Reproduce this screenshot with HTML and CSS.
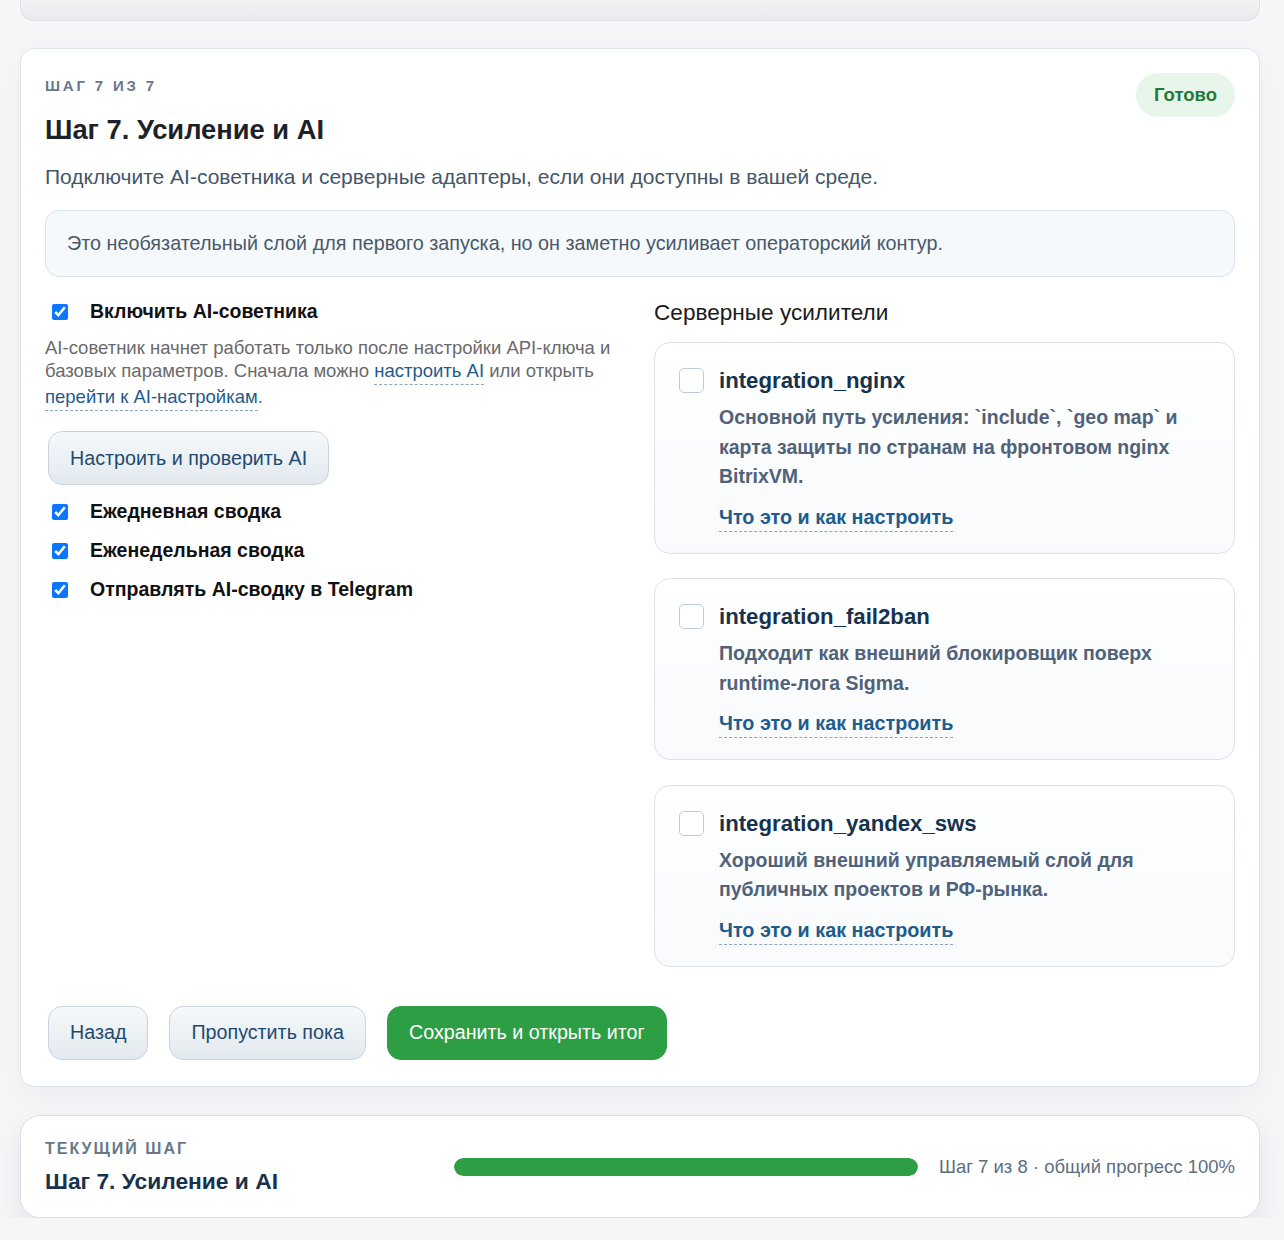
FILE: index.html
```html
<!DOCTYPE html>
<html lang="ru">

<head>
  <meta charset="UTF-8">
  <meta name="viewport" content="width=device-width, initial-scale=1.0">
  <title>Мастер настройки</title>

  <link rel="stylesheet" href="styles.css">

</head>

<body>

  <div class="wrap">

    <div class="stubCard"></div>

    <!-- step 7 -->
    <section class="stepCard">
      <div class="stepHead">
        <div>
          <div class="eyebrow">Шаг 7 из 7</div>
          <h2 class="stepTitle">Шаг 7. Усиление и AI</h2>
        </div>
        <span class="badge">Готово</span>
      </div>

      <p class="stepDesc">Подключите AI-советника и серверные адаптеры, если они доступны в вашей среде.</p>

      <div class="note">Это необязательный слой для первого запуска, но он заметно усиливает операторский контур.</div>

      <div class="cols">
        <div class="leftCol">
          <label class="checkRow">
            <input type="checkbox" checked>
            <span>Включить AI-советника</span>
          </label>
          <p class="hint">
            AI-советник начнет работать только после настройки API-ключа и базовых параметров.
            Сначала можно <a class="dashLink" href="#">настроить AI</a> или открыть
            <a class="dashLink" href="#">перейти к AI-настройкам</a>.
          </p>
          <button class="btn btnAi">Настроить и проверить AI</button>
          <div class="checkList">
            <label class="checkRow">
              <input type="checkbox" checked>
              <span>Ежедневная сводка</span>
            </label>
            <label class="checkRow">
              <input type="checkbox" checked>
              <span>Еженедельная сводка</span>
            </label>
            <label class="checkRow">
              <input type="checkbox" checked>
              <span>Отправлять AI-сводку в Telegram</span>
            </label>
          </div>
        </div>

        <div class="rightCol">
          <h3 class="colTitle">Серверные усилители</h3>

          <div class="intCard">
            <label class="intHead">
              <input type="checkbox" class="intBox">
              <span class="intName">integration_nginx</span>
            </label>
            <div class="intBody">
              <p class="intDesc">Основной путь усиления: `include`, `geo map` и карта защиты по странам на фронтовом nginx BitrixVM.</p>
              <a class="dashLink intLink" href="#">Что это и как настроить</a>
            </div>
          </div>

          <div class="intCard">
            <label class="intHead">
              <input type="checkbox" class="intBox">
              <span class="intName">integration_fail2ban</span>
            </label>
            <div class="intBody">
              <p class="intDesc">Подходит как внешний блокировщик поверх runtime-лога Sigma.</p>
              <a class="dashLink intLink" href="#">Что это и как настроить</a>
            </div>
          </div>

          <div class="intCard">
            <label class="intHead">
              <input type="checkbox" class="intBox">
              <span class="intName">integration_yandex_sws</span>
            </label>
            <div class="intBody">
              <p class="intDesc">Хороший внешний управляемый слой для публичных проектов и РФ-рынка.</p>
              <a class="dashLink intLink" href="#">Что это и как настроить</a>
            </div>
          </div>
        </div>
      </div>

      <div class="actions">
        <button class="btn">Назад</button>
        <button class="btn">Пропустить пока</button>
        <button class="btn btnGreen">Сохранить и открыть итог</button>
      </div>
    </section>

    <!-- progress -->
    <section class="progressCard">
      <div>
        <div class="eyebrow eyebrowSmall">Текущий шаг</div>
        <div class="progressTitle">Шаг 7. Усиление и AI</div>
      </div>
      <div class="bar"><div class="barFill" style="width: 100%"></div></div>
      <div class="progressText">Шаг 7 из 8 · общий прогресс 100%</div>
    </section>

  </div>

</body>

</html>
```

FILE: styles.css
```css
body {
  margin: 0;
  background: #f5f6f8;
  font-family: "Liberation Sans", Arial, sans-serif;
  color: #1d2228;
}

.wrap {
  width: 1240px;
  margin-left: 20px;
}

/* previous step, cut off */
.stubCard {
  height: 20px;
  background: linear-gradient(#f1f2f4, #e8eaed);
  border: 1px solid #d9dfe6;
  border-top: none;
  border-radius: 0 0 14px 14px;
}

/* step card */
.stepCard {
  margin-top: 27px;
  padding: 24px 24px 26px;
  background: #fff;
  border: 1px solid #dce3ea;
  border-radius: 14px;
  box-shadow: 0 10px 30px rgba(20, 30, 50, 0.04);
}

.stepHead {
  display: flex;
  justify-content: space-between;
  align-items: flex-start;
}

.eyebrow {
  margin-top: 4px;
  font-size: 15px;
  line-height: 17px;
  font-weight: bold;
  letter-spacing: 2.8px;
  text-transform: uppercase;
  color: #677889;
}

.stepTitle {
  margin: 20px 0 0;
  font-size: 27.3px;
  line-height: 32px;
  font-weight: bold;
  color: #1d2228;
}

.badge {
  padding: 0 18px;
  height: 44px;
  line-height: 44px;
  border-radius: 22px;
  background: #e8f5eb;
  color: #237a38;
  font-size: 18.5px;
  font-weight: bold;
}

.stepDesc {
  margin: 17px 0 0;
  font-size: 21px;
  line-height: 27px;
  color: #44566a;
}

.note {
  margin-top: 20px;
  padding: 20px 21px;
  background: #f5f9fc;
  border: 1px solid #dbe5ee;
  border-radius: 14px;
  font-size: 19.8px;
  line-height: 25px;
  color: #4a5868;
}

.cols {
  margin-top: 23px;
  display: grid;
  grid-template-columns: 1fr 1fr;
  gap: 28px;
}

/* left */
.checkRow {
  display: flex;
  align-items: center;
  gap: 22px;
  font-size: 19.5px;
  line-height: 23px;
  font-weight: bold;
  color: #111;
}

.checkRow input {
  margin: 0 0 0 7px;
  width: 16px;
  height: 16px;
  accent-color: #0b76ff;
}

.hint {
  margin: 13px 0 0;
  font-size: 18.5px;
  line-height: 23px;
  color: #6a6a6a;
}

.dashLink {
  color: #1f5b8c;
  text-decoration: none;
  border-bottom: 1px dashed #8aa6c0;
  padding-bottom: 2px;
}

.hint .dashLink {
  display: inline-block;
  line-height: 22px;
}

.btn {
  height: 54px;
  padding: 0 21px;
  margin-left: 3px;
  border: 1px solid #c7d4df;
  border-radius: 14px;
  background: linear-gradient(#f6f9fb, #e2e9ee);
  color: #1f4a70;
  font-family: "Liberation Sans", Arial, sans-serif;
  font-size: 19.7px;
  cursor: pointer;
}

.btnAi {
  margin-top: 20px;
}

.checkList {
  margin-top: 15px;
  display: flex;
  flex-direction: column;
  gap: 16px;
}

/* right */
.colTitle {
  margin: 0 0 16px;
  font-size: 22.6px;
  line-height: 26px;
  font-weight: normal;
  color: #1a1a1a;
}

.intCard {
  margin-bottom: 24.5px;
  padding: 24px 24px 21px;
  background: linear-gradient(#fff, #f8fafc);
  border: 1px solid #dbe3ea;
  border-radius: 16px;
}

.intCard:last-child {
  margin-bottom: 0;
}

.intHead {
  display: flex;
  align-items: center;
  gap: 15px;
}

.intBox {
  appearance: none;
  margin: 0;
  width: 25px;
  height: 25px;
  border: 1px solid #bccadb;
  border-radius: 5px;
  background: #fff;
}

.intName {
  font-size: 22.2px;
  line-height: 27px;
  font-weight: bold;
  color: #17324d;
}

.intBody {
  padding-left: 40px;
}

.intDesc {
  margin: 9px 0 0;
  font-size: 19.5px;
  line-height: 29.5px;
  font-weight: bold;
  color: #50627a;
}

.intLink {
  display: inline-block;
  margin-top: 14px;
  font-size: 19.8px;
  line-height: 23px;
  font-weight: bold;
}

/* actions */
.actions {
  margin-top: 39px;
  display: flex;
  gap: 18px;
}

.btnGreen {
  background: #2e9e45;
  border-color: #2e9e45;
  color: #fff;
}

/* progress */
.progressCard {
  margin-top: 28px;
  padding: 24px 24px 22px;
  display: grid;
  grid-template-columns: 388px 1fr auto;
  gap: 21px;
  align-items: center;
  background: #fff;
  border: 1px solid #d6dee7;
  border-radius: 20px;
  box-shadow: 0 12px 28px rgba(20, 30, 50, 0.08);
}

.eyebrowSmall {
  margin-top: 0;
  font-size: 16px;
  letter-spacing: 2px;
}

.progressTitle {
  margin-top: 11px;
  font-size: 22.8px;
  line-height: 27px;
  font-weight: bold;
  color: #17324d;
}

.bar {
  height: 18px;
  border-radius: 9px;
  background: #e4e9ee;
  overflow: hidden;
}

.barFill {
  height: 100%;
  background: #2e9e45;
  border-radius: 9px;
}

.progressText {
  font-size: 18.5px;
  color: #5d6e80;
}
```
